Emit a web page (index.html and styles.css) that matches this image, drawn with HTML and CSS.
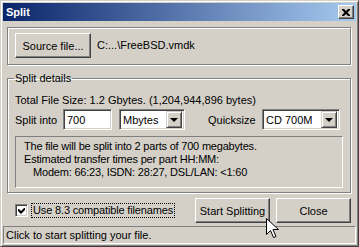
FILE: index.html
```
<!DOCTYPE html>
<html lang="en">
<head>
    <meta charset="UTF-8">
    <title>Split</title>
    <link rel="stylesheet" href="styles.css">
</head>
<body>
    <div class="window">
        <div class="titlebar">
            <span class="title">Split</span>
            <span class="close-btn">
                <svg width="8" height="7" viewBox="0 0 8 7"><path d="M0 0h2l2 2 2-2h2v1l-2.5 2.5L8 6v1H6L4 5 2 7H0V6l2.5-2.5L0 1z" fill="#000"/></svg>
            </span>
        </div>

        <div class="content">
            <div class="group source-group">
                <button class="btn source-btn">Source file...</button>
                <span class="path">C:...\FreeBSD.vmdk</span>
            </div>

            <fieldset class="group details">
                <legend>Split details</legend>
                <div class="total">Total File Size: 1.2 Gbytes. (1,204,944,896 bytes)</div>
                <div class="split-row">
                    <span class="lbl">Split into</span>
                    <span class="edit size-edit">700</span>
                    <span class="combo unit-combo">
                        <span class="combo-text">Mbytes</span>
                        <span class="drop-btn"><i class="arrow"></i></span>
                    </span>
                    <span class="lbl quick-lbl">Quicksize</span>
                    <span class="combo quick-combo">
                        <span class="combo-text">CD 700M</span>
                        <span class="drop-btn"><i class="arrow"></i></span>
                    </span>
                </div>
                <div class="info">
                    <div>The file will be split into 2 parts of 700 megabytes.</div>
                    <div>Estimated transfer times per part HH:MM:</div>
                    <div class="indent">Modem: 66:23, ISDN: 28:27, DSL/LAN: &lt;1:60</div>
                </div>
            </fieldset>

            <div class="actions">
                <label class="check">
                    <span class="check-box">
                        <svg width="7" height="7" viewBox="0 0 7 7"><path d="M0 2h1l2 2 3-3 1 0v2L3 7 0 4z" fill="#000"/></svg>
                    </span>
                    <span class="check-text">Use 8.3 compatible filenames</span>
                </label>
                <button class="btn action-btn">Start Splitting</button>
                <button class="btn action-btn">Close</button>
            </div>
        </div>

        <div class="statusbar">
            <div class="status-field">Click to start splitting your file.</div>
        </div>

        <svg class="cursor" width="13" height="22" viewBox="0 0 13 22">
            <path d="M0.5 0.5v16l4-4 3 7 2.5-1-3-7h5.5z" fill="#fff" stroke="#000" stroke-width="1"/>
        </svg>
    </div>
</body>
</html>
```
FILE: styles.css
```
:root {
    --face: #d4d0c8;
    --light: #ffffff;
    --shadow: #808080;
    --dark: #404040;
}

body {
    margin: 0;
    font-family: "Liberation Sans", Arial, sans-serif;
    font-size: 11px;
    color: #000;
    background: var(--face);
}

.window {
    position: relative;
    width: 359px;
    height: 247px;
    box-sizing: border-box;
    background: var(--face);
    border: 1px solid;
    border-color: var(--face) var(--dark) var(--dark) var(--face);
    box-shadow: inset 1px 1px var(--light), inset -1px -1px var(--shadow);
    padding: 2px;
    display: flex;
    flex-direction: column;
    overflow: hidden;
}

.titlebar {
    height: 18px;
    flex: none;
    background: linear-gradient(to right, #0a246a, #a6caf0);
    display: flex;
    align-items: center;
    justify-content: space-between;
    padding: 0 2px 0 3px;
}

.title {
    color: #fff;
    font-weight: bold;
    font-size: 11px;
}

.close-btn {
    width: 16px;
    height: 14px;
    box-sizing: border-box;
    background: var(--face);
    border: 1px solid;
    border-color: var(--light) var(--dark) var(--dark) var(--light);
    box-shadow: inset -1px -1px var(--shadow);
    display: flex;
    align-items: center;
    justify-content: center;
}

.content {
    flex: 1;
    padding: 6px 5px 0 4px;
    display: flex;
    flex-direction: column;
}

.group {
    border: 1px solid var(--shadow);
    box-shadow: inset 1px 1px var(--light), 1px 1px var(--light);
}

.source-group {
    height: 38px;
    box-sizing: border-box;
    padding: 5px 7px 0;
    display: flex;
    align-items: flex-start;
}

.btn {
    font: inherit;
    color: #000;
    background: var(--face);
    border: 1px solid;
    border-color: var(--light) var(--dark) var(--dark) var(--light);
    box-shadow: inset -1px -1px var(--shadow), inset 1px 1px var(--face);
    height: 25px;
    padding: 0;
    border-radius: 0;
}

.source-btn {
    width: 76px;
}

.path {
    margin-left: 6px;
    line-height: 25px;
}

.details {
    margin: 7px 0 0;
    padding: 0 7px 4px;
    min-width: 0;
}

.details legend {
    padding: 0 1px;
    margin-left: -1px;
    line-height: 13px;
}

.total {
    margin-top: 9px;
    line-height: 13px;
}

.split-row {
    display: flex;
    align-items: center;
    margin-top: 2px;
    height: 21px;
}

.lbl {
    width: 48px;
}

.edit,
.combo {
    height: 21px;
    box-sizing: border-box;
    background: #fff;
    border: 1px solid;
    border-color: var(--shadow) var(--light) var(--light) var(--shadow);
    box-shadow: inset 1px 1px var(--dark), inset -1px -1px var(--face);
    display: flex;
    align-items: center;
}

.size-edit {
    width: 49px;
    padding-left: 3px;
}

.combo {
    padding: 2px;
    justify-content: space-between;
}

.combo-text {
    padding-left: 1px;
}

.unit-combo {
    width: 66px;
    margin-left: 7px;
}

.quick-lbl {
    margin-left: 23px;
    width: 54px;
}

.quick-combo {
    width: 78px;
}

.drop-btn {
    width: 16px;
    height: 17px;
    box-sizing: border-box;
    background: var(--face);
    border: 1px solid;
    border-color: var(--face) var(--dark) var(--dark) var(--face);
    box-shadow: inset 1px 1px var(--light), inset -1px -1px var(--shadow);
    display: flex;
    align-items: center;
    justify-content: center;
}

.arrow {
    width: 0;
    height: 0;
    border-left: 4px solid transparent;
    border-right: 4px solid transparent;
    border-top: 4px solid #000;
    margin-left: -1px;
}

.info {
    margin-top: 6px;
    height: 52px;
    box-sizing: border-box;
    border: 1px solid;
    border-color: var(--shadow) var(--light) var(--light) var(--shadow);
    padding: 3px 0 0 8px;
    line-height: 13px;
    letter-spacing: -0.2px;
}

.indent {
    padding-left: 9px;
}

.actions {
    display: flex;
    align-items: center;
    margin-top: 5px;
    padding-left: 8px;
}

.check {
    display: flex;
    align-items: center;
    flex: 1;
}

.check-box {
    width: 13px;
    height: 13px;
    box-sizing: border-box;
    background: #fff;
    border: 1px solid;
    border-color: var(--shadow) var(--light) var(--light) var(--shadow);
    box-shadow: inset 1px 1px var(--dark), inset -1px -1px var(--face);
    display: flex;
    align-items: center;
    justify-content: center;
}

.check-text {
    margin-left: 4px;
    padding: 0 1px;
    line-height: 13px;
    letter-spacing: -0.15px;
    outline: 1px dotted #000;
}

.action-btn {
    width: 75px;
    margin-left: 6px;
}

.statusbar {
    flex: none;
    padding: 3px 0 1px;
}

.status-field {
    height: 18px;
    box-sizing: border-box;
    border: 1px solid;
    border-color: var(--shadow) var(--light) var(--light) var(--shadow);
    padding-left: 2px;
    line-height: 16px;
}

.cursor {
    position: absolute;
    left: 265px;
    top: 217px;
}
```
